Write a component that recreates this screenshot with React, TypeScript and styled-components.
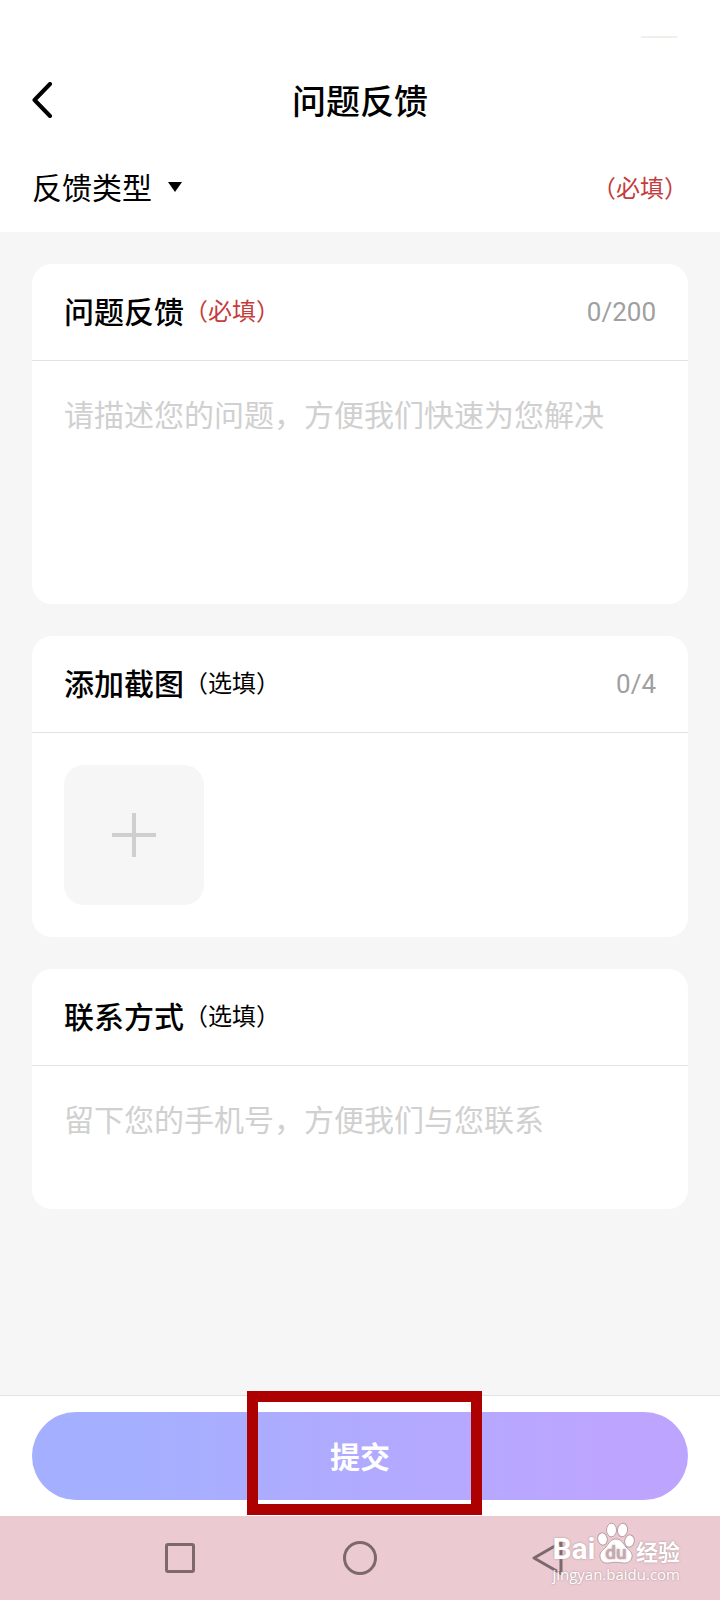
import React, { useId, useState } from "react";
import styled, { createGlobalStyle } from "styled-components";

const GlobalStyle = createGlobalStyle`
  *, *::before, *::after { box-sizing: border-box; }
  body {
    margin: 0;
    background: #f6f6f6;
    color: #000;
    font-family: "Noto Sans CJK SC", sans-serif;
  }
  button, input, select, textarea { font: inherit; color: inherit; }
`;

const Page = styled.div`
  display: flex;
  flex-direction: column;
  min-height: 100vh;
`;

const Header = styled.header`
  background: #fff;
`;

const StatusStrip = styled.div`
  display: flex;
  justify-content: flex-end;
  height: 38px;
  padding: 0 43px;
`;

const BatteryMark = styled.span`
  width: 36px;
  border-bottom: 2px solid #f1efe9;
`;

const TitleBar = styled.div`
  display: grid;
  grid-template-columns: 72px 1fr 72px;
  align-items: center;
  height: 124px;
`;

const BackButton = styled.button`
  display: flex;
  align-items: center;
  height: 48px;
  padding: 0 0 0 32px;
  border: 0;
  background: none;
`;

const Title = styled.h1`
  margin: 0;
  font-size: 34px;
  line-height: 48px;
  font-weight: 500;
  text-align: center;
`;

const TypeRow = styled.div`
  display: flex;
  align-items: center;
  justify-content: space-between;
  height: 70px;
  padding: 0 32px 20px;
`;

const TypePicker = styled.div`
  display: flex;
  align-items: center;
  gap: 16px;
`;

const TypeSelect = styled.select`
  appearance: none;
  padding: 0 0 2px;
  border: 0;
  background: none;
  font-size: 30px;
  line-height: 44px;
`;

const Hint = styled.span<{ $required?: boolean }>`
  font-size: 24px;
  line-height: 44px;
  font-weight: 400;
  color: ${(p) => (p.$required ? "#c43c3c" : "#000")};
`;

const Form = styled.main`
  flex: 1;
  display: flex;
  flex-direction: column;
  gap: 32px;
  padding: 32px;
`;

const Card = styled.section`
  overflow: hidden;
  border-radius: 20px;
  background: #fff;
`;

const CardHead = styled.div`
  display: flex;
  align-items: center;
  justify-content: space-between;
  height: 97px;
  padding: 0 32px;
  border-bottom: 1px solid #e2e2e2;
`;

const CardLabel = styled.label`
  display: flex;
  align-items: center;
  padding-bottom: 4px;
  font-size: 30px;
  line-height: 44px;
  font-weight: 500;
`;

const Counter = styled.span`
  font-family: Roboto, sans-serif;
  font-size: 26px;
  line-height: 44px;
  color: #a0a0a0;
`;

const TextArea = styled.textarea<{ $height: number }>`
  display: block;
  width: 100%;
  height: ${(p) => p.$height}px;
  padding: 32px;
  border: 0;
  outline: 0;
  resize: none;
  background: none;
  font-size: 30px;
  line-height: 40px;
  &::placeholder { color: #d0d0d0; opacity: 1; }
`;

const Shots = styled.div`
  display: flex;
  gap: 16px;
  padding: 32px;
`;

const AddTile = styled.button`
  display: grid;
  place-items: center;
  width: 140px;
  height: 140px;
  padding: 0;
  border: 0;
  border-radius: 20px;
  background: #f6f6f6;
`;

const Footer = styled.footer`
  position: relative;
  padding: 16px 32px;
  border-top: 1px solid #e2e2e2;
  background: #fff;
`;

const Submit = styled.button`
  display: block;
  width: 100%;
  height: 88px;
  padding: 0 0 2px;
  border: 0;
  border-radius: 44px;
  background: linear-gradient(90deg, #a4b0ff 12%, #bda5ff 88%);
  color: #fff;
  font-size: 30px;
  line-height: 44px;
  font-weight: 700;
`;

const Highlight = styled.div`
  position: absolute;
  top: -5px;
  left: calc(50% - 113px);
  width: 235px;
  height: 124px;
  border: 11px solid #ad0000;
  pointer-events: none;
`;

const NavBar = styled.nav`
  position: relative;
  display: grid;
  grid-template-columns: repeat(3, 1fr);
  height: 84px;
  padding: 0 12.5%;
  background: #ebcad1;
`;

const NavButton = styled.button`
  display: grid;
  place-items: center;
  padding: 0;
  border: 0;
  background: none;
`;

const Watermark = styled.div`
  position: absolute;
  right: 40px;
  bottom: 16px;
  color: #fff;
  text-shadow: 0 0 2px #a58990;
`;

const Brand = styled.div`
  display: flex;
  align-items: flex-end;
  justify-content: space-between;
  height: 42px;
`;

const BrandLatin = styled.span`
  font-family: Roboto, sans-serif;
  font-size: 30px;
  line-height: 30px;
  font-weight: 700;
`;

const BrandHan = styled.span`
  font-size: 22px;
  line-height: 28px;
  font-weight: 700;
`;

const Site = styled.div`
  font-family: "Open Sans", sans-serif;
  font-size: 15px;
  line-height: 20px;
`;

const Paw = () => (
  <svg width="38" height="42" viewBox="0 0 38 42" aria-hidden="true">
    <g fill="#fff" stroke="#bb9ea5" strokeWidth="1">
      <ellipse cx="5.500" cy="17" rx="4.800" ry="6.200" transform="rotate(-10 5.500 17)" />
      <ellipse cx="14.500" cy="8" rx="5" ry="6.800" />
      <ellipse cx="25.500" cy="8" rx="5" ry="6.800" transform="rotate(8 25.500 8)" />
      <ellipse cx="32.500" cy="19" rx="4.800" ry="6.200" transform="rotate(10 32.500 19)" />
      <path d="M19 17c5 0 7 4 10 8 3 3 7 6 6 10-1 5-5 6.500-9 6-5-1-9-1-14 0-5 .5-8-1-9-6-1-4 3-7 6-10 3-4 5-8 10-8Z" />
    </g>
    <text x="19" y="37" textAnchor="middle" fill="#c9a9b0" fontFamily="Roboto, sans-serif" fontSize="19" fontWeight="500">du</text>
  </svg>
);

const TYPES = ["反馈类型"];
const FEEDBACK_LIMIT = 200;
const SHOT_LIMIT = 4;

type CardProps = {
  id: string;
  title: string;
  required?: boolean;
  counter?: string;
  children: React.ReactNode;
};

function FormCard({ id, title, required, counter, children }: CardProps) {
  return (
    <Card>
      <CardHead>
        <CardLabel htmlFor={id}>
          {title}
          <Hint $required={required}>{required ? "（必填）" : "（选填）"}</Hint>
        </CardLabel>
        {counter && <Counter>{counter}</Counter>}
      </CardHead>
      {children}
    </Card>
  );
}

export default function App() {
  const ids = useId();
  const [feedback, setFeedback] = useState("");
  const [contact, setContact] = useState("");

  return (
    <Page>
      <GlobalStyle />
      <Header>
        <StatusStrip>
          <BatteryMark />
        </StatusStrip>
        <TitleBar>
          <BackButton type="button" aria-label="返回">
            <svg width="21" height="36" viewBox="0 0 21 36" fill="none" stroke="#000" strokeWidth="4" strokeLinecap="round" strokeLinejoin="round">
              <path d="M18 2 2.500 18 18 34" />
            </svg>
          </BackButton>
          <Title>问题反馈</Title>
        </TitleBar>
        <TypeRow>
          <TypePicker>
            <TypeSelect aria-label="反馈类型">
              {TYPES.map((t) => (
                <option key={t}>{t}</option>
              ))}
            </TypeSelect>
            <svg width="14" height="10" viewBox="0 0 14 10" aria-hidden="true">
              <path d="M0 0h14L7 10Z" />
            </svg>
          </TypePicker>
          <Hint $required>（必填）</Hint>
        </TypeRow>
      </Header>

      <Form>
        <FormCard id={`${ids}f`} title="问题反馈" required counter={`${feedback.length}/${FEEDBACK_LIMIT}`}>
          <TextArea
            id={`${ids}f`}
            $height={243}
            maxLength={FEEDBACK_LIMIT}
            placeholder="请描述您的问题，方便我们快速为您解决"
            value={feedback}
            onChange={(e) => setFeedback(e.target.value)}
          />
        </FormCard>
        <FormCard id={`${ids}s`} title="添加截图" counter={`0/${SHOT_LIMIT}`}>
          <Shots>
            <AddTile id={`${ids}s`} type="button">
              <svg width="44" height="44" viewBox="0 0 44 44" stroke="#cfcfcf" strokeWidth="4" aria-hidden="true">
                <path d="M22 0v44M0 22h44" />
              </svg>
            </AddTile>
          </Shots>
        </FormCard>
        <FormCard id={`${ids}c`} title="联系方式">
          <TextArea
            id={`${ids}c`}
            $height={143}
            placeholder="留下您的手机号，方便我们与您联系"
            value={contact}
            onChange={(e) => setContact(e.target.value)}
          />
        </FormCard>
      </Form>

      <Footer>
        <Submit type="submit">提交</Submit>
        <Highlight />
      </Footer>

      <NavBar>
        <NavButton type="button" aria-label="最近任务">
          <svg width="48" height="48" viewBox="0 0 48 48" fill="none" stroke="#7d686c" strokeWidth="3">
            <rect x="10.500" y="10.500" width="27" height="27" rx="1.500" />
          </svg>
        </NavButton>
        <NavButton type="button" aria-label="主屏幕">
          <svg width="48" height="48" viewBox="0 0 48 48" fill="none" stroke="#7d686c" strokeWidth="3">
            <circle cx="24" cy="24" r="15.500" />
          </svg>
        </NavButton>
        <NavButton type="button" aria-label="返回上一级">
          <svg width="48" height="48" viewBox="0 0 48 48" fill="none" stroke="#7d686c" strokeWidth="3" strokeLinejoin="round">
            <path d="M45 8.500v31L18 24Z" />
          </svg>
        </NavButton>
        <Watermark>
          <Brand>
            <BrandLatin>Bai</BrandLatin>
            <Paw />
            <BrandHan>经验</BrandHan>
          </Brand>
          <Site>jingyan.baidu.com</Site>
        </Watermark>
      </NavBar>
    </Page>
  );
}
